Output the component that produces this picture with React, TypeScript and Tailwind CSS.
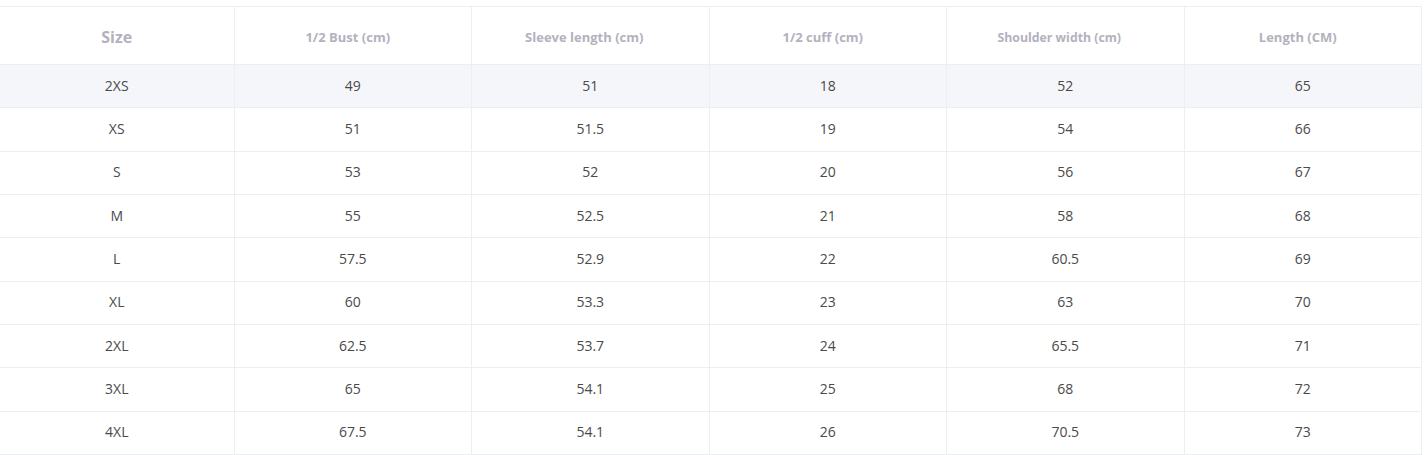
const headers = [
  { label: 'Size', cls: 'text-[16px] pt-[2px]' },
  { label: '1/2 Bust (cm)', cls: 'text-[13px] pr-[10px] pt-[4px]' },
  { label: 'Sleeve length (cm)', cls: 'text-[13px] pr-[12px] pt-[4px]' },
  { label: '1/2 cuff (cm)', cls: 'text-[13px] pr-[10px] pt-[4px]' },
  { label: 'Shoulder width (cm)', cls: 'text-[12.3px] pr-[12px] pt-[5px]' },
  { label: 'Length (CM)', cls: 'text-[13px] pr-[10px] pt-[4px]' },
];

const rows: string[][] = [
  ['2XS', '49', '51', '18', '52', '65'],
  ['XS', '51', '51.5', '19', '54', '66'],
  ['S', '53', '52', '20', '56', '67'],
  ['M', '55', '52.5', '21', '58', '68'],
  ['L', '57.5', '52.9', '22', '60.5', '69'],
  ['XL', '60', '53.3', '23', '63', '70'],
  ['2XL', '62.5', '53.7', '24', '65.5', '71'],
  ['3XL', '65', '54.1', '25', '68', '72'],
  ['4XL', '67.5', '54.1', '26', '70.5', '73'],
];

export default function App() {
  return (
    <main className="min-h-screen bg-white pt-[6px] font-['Open_Sans','Noto_Sans',sans-serif]">
      <table className="w-[1422px] table-fixed border-collapse text-center">
        <colgroup>
          <col className="w-[234px]" />
          <col />
          <col />
          <col />
          <col />
          <col />
        </colgroup>
        <thead>
          <tr className="h-[58px] border-y border-[#eceef2]">
            {headers.map((h, i) => (
              <th
                key={h.label}
                className={`font-bold text-[#b4b1bd] ${h.cls} ${
                  i > 0 ? 'border-l border-[#eceef2]' : ''
                } ${i === headers.length - 1 ? 'border-r border-[#eceef2]' : ''}`}
              >
                {h.label}
              </th>
            ))}
          </tr>
        </thead>
        <tbody>
          {rows.map((row, r) => (
            <tr
              key={row[0]}
              className={`h-[43.33px] border-b border-[#eceef2] ${
                r === 0 ? 'bg-[#f5f6fa]' : 'bg-white'
              }`}
            >
              {row.map((cell, i) => (
                <td
                  key={i}
                  className={`pb-[2px] text-[14px] text-[#4a4a4a] ${
                    i > 0 ? 'border-l border-[#eceef2]' : ''
                  } ${i === row.length - 1 ? 'border-r border-[#eceef2]' : ''}`}
                >
                  {cell}
                </td>
              ))}
            </tr>
          ))}
        </tbody>
      </table>
    </main>
  );
}
